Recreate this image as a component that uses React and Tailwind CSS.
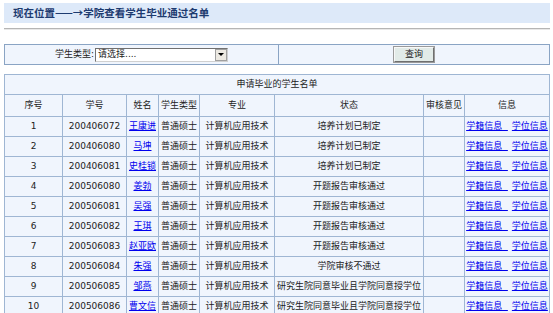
import React from "react";

const rows = [
  ["1", "200406072", "王康进", "培养计划已制定"],
  ["2", "200406080", "马坤", "培养计划已制定"],
  ["3", "200406081", "史桂锁", "培养计划已制定"],
  ["4", "200506080", "姜勃", "开题报告审核通过"],
  ["5", "200506081", "吴强", "开题报告审核通过"],
  ["6", "200506082", "王琪", "开题报告审核通过"],
  ["7", "200506083", "赵亚欧", "开题报告审核通过"],
  ["8", "200506084", "朱强", "学院审核不通过"],
  ["9", "200506085", "邹燕", "研究生院同意毕业且学院同意授学位"],
  ["10", "200506086", "曹文信", "研究生院同意毕业且学院同意授学位"],
];

const td = "border border-[#9fb6d3] text-center px-0 py-0 whitespace-nowrap";

export default function App() {
  return (
    <div
      className="w-[553px] h-[313px] overflow-hidden bg-white text-[9px] text-[#222]"
      style={{ fontFamily: '"DejaVu Sans", "Noto Sans CJK SC", sans-serif' }}
    >
      <div className="pt-[3px] px-[4px] pr-[3px]">
        <div className="h-[20px] bg-[#dde9f9] flex items-center pl-[9px]">
          <span className="text-[10.5px] font-bold text-[#1d3b70]" style={{ fontFamily: '"Noto Sans CJK SC", sans-serif' }}>
            现在位置——→学院查看学生毕业通过名单
          </span>
        </div>
        <div className="mt-[5px] h-[2px] border-t border-[#b5b5b5] border-b border-b-[#e8e8e8]" />

        <table className="mt-[14px] w-full table-fixed border-collapse bg-[#f0f5fd] border border-[#7f9db9]">
          <tbody>
            <tr className="h-[20px]">
              <td className="w-[274px] border border-[#8aa4c4] text-center p-0">
                <div className="flex items-center justify-center gap-[1px]">
                  <span>学生类型:</span>
                  <div className="w-[133px] h-[14px] bg-white border border-t-[#707070] border-l-[#707070] border-r-[#d0d0d0] border-b-[#d0d0d0] flex items-center justify-between pl-[2px]">
                    <span>请选择....</span>
                    <span className="w-[12px] h-[12px] bg-[#ece9e2] border border-[#a0a0a0] flex items-center justify-center">
                      <svg width="6" height="4" viewBox="0 0 6 4"><path d="M0 0 L6 0 L3 3 Z" fill="#000" /></svg>
                    </span>
                  </div>
                </div>
              </td>
              <td className="border border-[#8aa4c4] text-center p-0">
                <div className="flex justify-center">
                  <button className="w-[40px] h-[15px] bg-[#e2ebe8] border border-t-[#f8f8f8] border-l-[#f8f8f8] border-r-[#6f6f6f] border-b-[#6f6f6f] outline outline-1 outline-[#9a9a9a] text-[9px] leading-none">
                    查询
                  </button>
                </div>
              </td>
            </tr>
          </tbody>
        </table>

        <table className="mt-[9px] w-full table-fixed border-collapse bg-[#f0f5fd] border border-[#7f9db9]">
          <colgroup>
            <col className="w-[58px]" />
            <col className="w-[64px]" />
            <col className="w-[32px]" />
            <col className="w-[41px]" />
            <col className="w-[75px]" />
            <col className="w-[149px]" />
            <col className="w-[41px]" />
            <col />
          </colgroup>
          <tbody>
            <tr className="h-[20px]">
              <td colSpan={8} className={td}>申请毕业的学生名单</td>
            </tr>
            <tr className="h-[22px]">
              <td className={td}>序号</td>
              <td className={td}>学号</td>
              <td className={td}>姓名</td>
              <td className={td}>学生类型</td>
              <td className={td}>专业</td>
              <td className={td}>状态</td>
              <td className={td}>审核意见</td>
              <td className={td}>信息</td>
            </tr>
            {rows.map((r) => (
              <tr key={r[0]} className="h-[20px]">
                <td className={td}>{r[0]}</td>
                <td className={td}>{r[1]}</td>
                <td className={td}>
                  <a className="text-[#0000ee] underline">{r[2]}</a>
                </td>
                <td className={td}>普通硕士</td>
                <td className={td}>计算机应用技术</td>
                <td className={td}>{r[3]}</td>
                <td className={td}></td>
                <td className={td}>
                  <a className="text-[#0000ee] underline">学籍信息&nbsp;&nbsp;</a>
                  <a className="text-[#0000ee] underline ml-[4px]">学位信息</a>
                </td>
              </tr>
            ))}
          </tbody>
        </table>
      </div>
    </div>
  );
}
